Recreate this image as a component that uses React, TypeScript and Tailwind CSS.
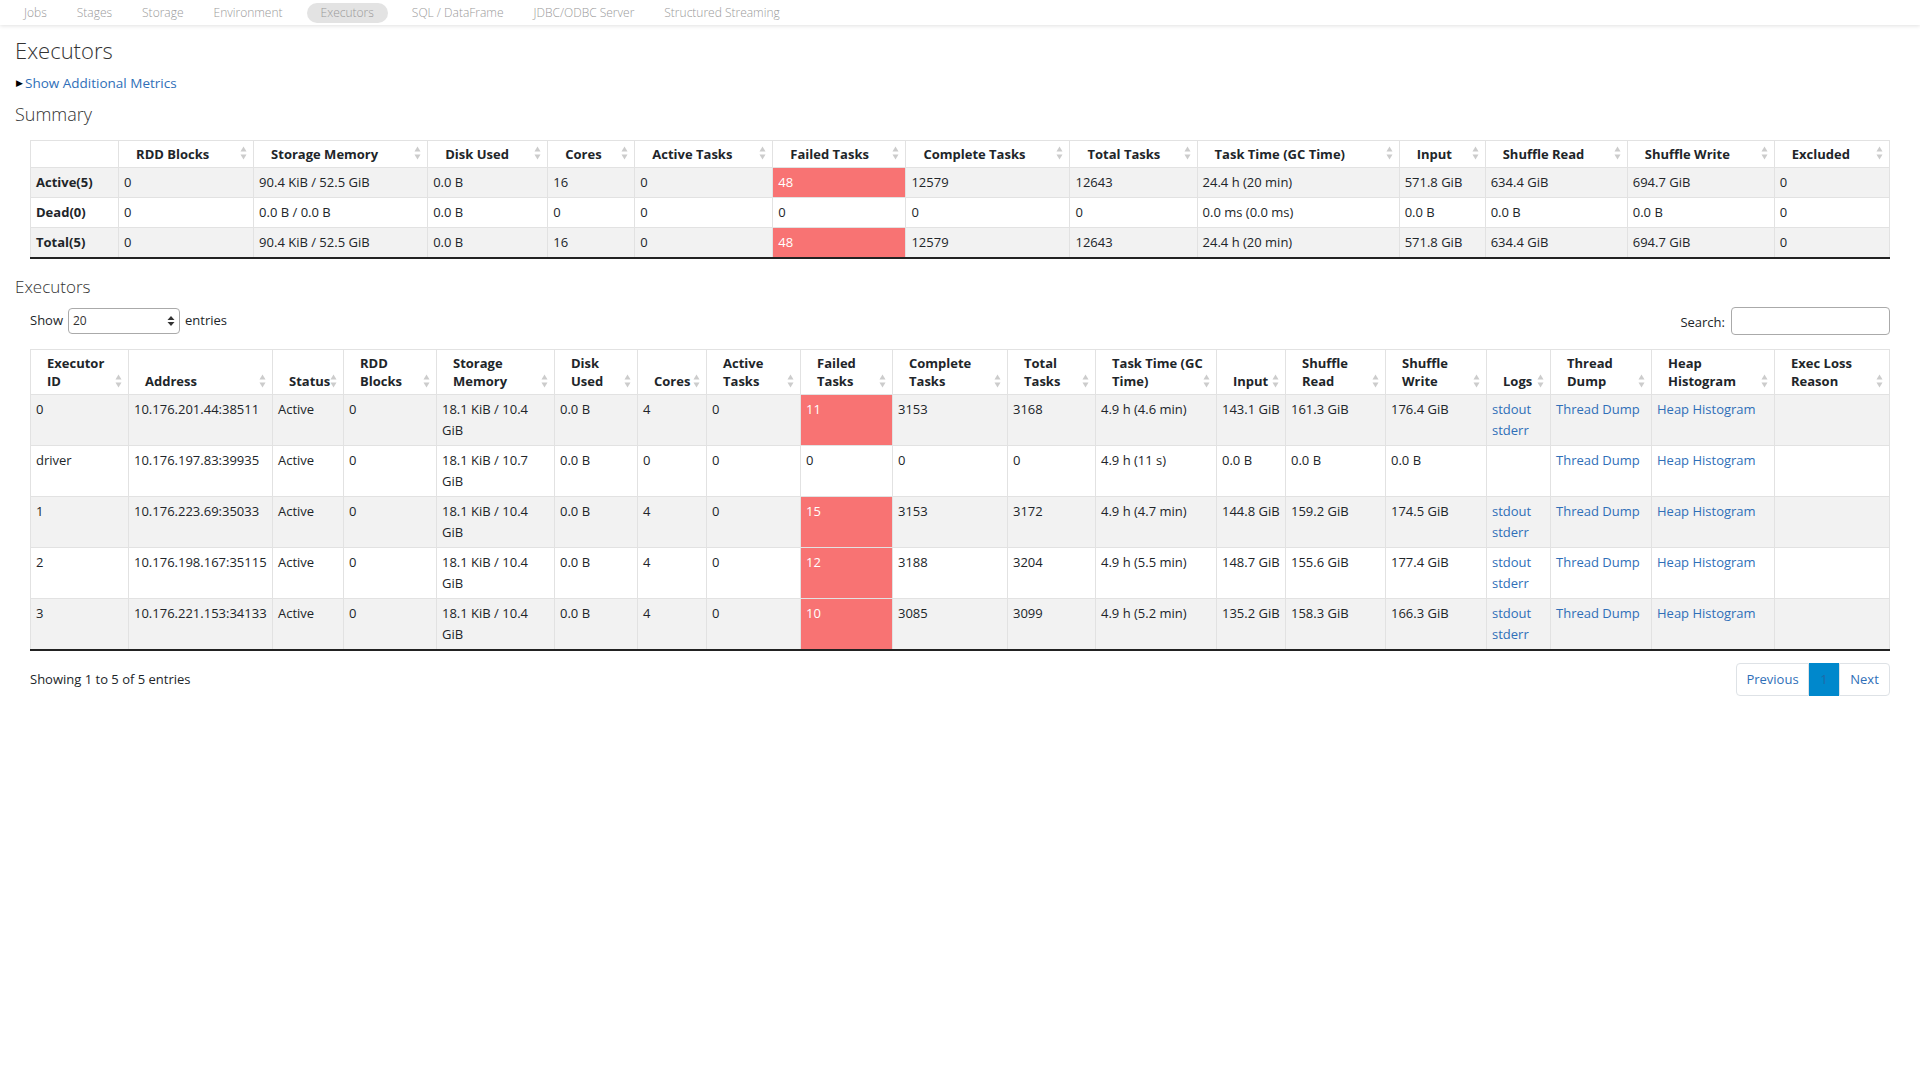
import React from 'react';

const font = { fontFamily: '"Open Sans", "Noto Sans", sans-serif' };

const navItems = ['Jobs', 'Stages', 'Storage', 'Environment', 'Executors', 'SQL / DataFrame', 'JDBC/ODBC Server', 'Structured Streaming'];

function SortIcon() {
  return (
    <svg width="7" height="14" viewBox="0 0 7 14" className="shrink-0 mb-[2px]">
      <path d="M3.5 0.5L6.5 5.5H0.5z" fill="#cccccc" />
      <path d="M3.5 13.5L6.5 8.5H0.5z" fill="#cccccc" />
    </svg>
  );
}

const summaryCols = [88, 135, 174, 120, 87, 138, 133, 164, 127, 202, 86, 142, 147, 115];
const summaryHead = ['', 'RDD Blocks', 'Storage Memory', 'Disk Used', 'Cores', 'Active Tasks', 'Failed Tasks', 'Complete Tasks', 'Total Tasks', 'Task Time (GC Time)', 'Input', 'Shuffle Read', 'Shuffle Write', 'Excluded'];
const summaryRows = [
  ['Active(5)', '0', '90.4 KiB / 52.5 GiB', '0.0 B', '16', '0', '48', '12579', '12643', '24.4 h (20 min)', '571.8 GiB', '634.4 GiB', '694.7 GiB', '0'],
  ['Dead(0)', '0', '0.0 B / 0.0 B', '0.0 B', '0', '0', '0', '0', '0', '0.0 ms (0.0 ms)', '0.0 B', '0.0 B', '0.0 B', '0'],
  ['Total(5)', '0', '90.4 KiB / 52.5 GiB', '0.0 B', '16', '0', '48', '12579', '12643', '24.4 h (20 min)', '571.8 GiB', '634.4 GiB', '694.7 GiB', '0'],
];

const execCols = [98, 144, 71, 93, 118, 83, 69, 94, 92, 115, 88, 121, 69, 100, 101, 64, 101, 123, 115];
const execHead: string[][] = [
  ['Executor', 'ID'], ['Address'], ['Status'], ['RDD', 'Blocks'], ['Storage', 'Memory'], ['Disk', 'Used'], ['Cores'],
  ['Active', 'Tasks'], ['Failed', 'Tasks'], ['Complete', 'Tasks'], ['Total', 'Tasks'], ['Task Time (GC', 'Time)'], ['Input'],
  ['Shuffle', 'Read'], ['Shuffle', 'Write'], ['Logs'], ['Thread', 'Dump'], ['Heap', 'Histogram'], ['Exec Loss', 'Reason'],
];

type Exec = {
  id: string; addr: string; mem: string; cores: string; failed: string; complete: string; total: string;
  time: string; input: string; read: string; write: string; logs: boolean;
};

const executors: Exec[] = [
  { id: '0', addr: '10.176.201.44:38511', mem: '10.4', cores: '4', failed: '11', complete: '3153', total: '3168', time: '4.9 h (4.6 min)', input: '143.1 GiB', read: '161.3 GiB', write: '176.4 GiB', logs: true },
  { id: 'driver', addr: '10.176.197.83:39935', mem: '10.7', cores: '0', failed: '0', complete: '0', total: '0', time: '4.9 h (11 s)', input: '0.0 B', read: '0.0 B', write: '0.0 B', logs: false },
  { id: '1', addr: '10.176.223.69:35033', mem: '10.4', cores: '4', failed: '15', complete: '3153', total: '3172', time: '4.9 h (4.7 min)', input: '144.8 GiB', read: '159.2 GiB', write: '174.5 GiB', logs: true },
  { id: '2', addr: '10.176.198.167:35115', mem: '10.4', cores: '4', failed: '12', complete: '3188', total: '3204', time: '4.9 h (5.5 min)', input: '148.7 GiB', read: '155.6 GiB', write: '177.4 GiB', logs: true },
  { id: '3', addr: '10.176.221.153:34133', mem: '10.4', cores: '4', failed: '10', complete: '3085', total: '3099', time: '4.9 h (5.2 min)', input: '135.2 GiB', read: '158.3 GiB', write: '166.3 GiB', logs: true },
];

const link = 'text-[#2f6fb8]';

export default function App() {
  return (
    <div className="min-h-screen w-full bg-white text-[#212529] text-[13px]" style={font}>
      {/* top nav */}
      <div className="h-[25px] flex items-center pl-[9px] bg-white shadow-[0_1px_4px_rgba(0,0,0,0.12)]">
        {navItems.map((n) =>
          n === 'Executors' ? (
            <span key={n} className="mx-[9px] px-[14px] h-[20px] flex items-center rounded-full bg-[#e3e3e3] text-[#9a9a9a] text-[12px] font-light">
              {n}
            </span>
          ) : (
            <span key={n} className="px-[15px] text-[#9a9a9a] text-[12px] font-light">{n}</span>
          )
        )}
      </div>

      <div className="px-[15px]">
        <h3 className="mt-[10px] text-[22px] leading-[30px] font-light text-[#333]">Executors</h3>
        <div className="mt-[9px] flex items-center h-[18px]">
          <span className="text-[9px] text-black mr-[2px] ml-[1px]">▶</span>
          <span className={`${link} text-[13.5px]`}>Show Additional Metrics</span>
        </div>
        <h4 className="mt-[9px] text-[18px] leading-[26px] font-light text-[#333]">Summary</h4>

        {/* summary table */}
        <div className="px-[15px] mt-[13px]">
          <table className="w-full table-fixed border-collapse border-t border-l border-r border-[#e2e2e2]">
            <colgroup>
              {summaryCols.map((w, i) => (
                <col key={i} style={{ width: w }} />
              ))}
            </colgroup>
            <thead>
              <tr>
                {summaryHead.map((h, i) => (
                  <th key={i} className="border border-[#e2e2e2] pl-[17px] pr-[6px] py-[3px] text-left font-bold text-[#212529] leading-[20px]">
                    {h && (
                      <div className="flex items-center justify-between">
                        <span>{h}</span>
                        <SortIcon />
                      </div>
                    )}
                  </th>
                ))}
              </tr>
            </thead>
            <tbody>
              {summaryRows.map((r, ri) => (
                <tr key={ri} className={ri % 2 === 0 ? 'bg-[#f2f2f2]' : 'bg-white'}>
                  {r.map((c, ci) => {
                    const red = ci === 6 && c !== '0';
                    return (
                      <td
                        key={ci}
                        className={`border-x border-t border-[#e2e2e2] px-[5px] py-[4px] leading-[21px] ${ci === 0 ? 'font-bold' : ''} ${red ? 'bg-[#f87373] text-white' : ''} ${ri === 2 ? 'border-b-2 border-b-[#222]' : ''}`}
                      >
                        {c}
                      </td>
                    );
                  })}
                </tr>
              ))}
            </tbody>
          </table>
        </div>

        <h4 className="mt-[16px] text-[17px] leading-[24px] font-light text-[#333]">Executors</h4>

        <div className="px-[15px]">
          <div className="mt-[8px] flex items-center justify-between">
            <div className="flex items-center gap-[5px]">
              <span>Show</span>
              <div className="w-[112px] h-[26px] border border-[#aaa] rounded-[4px] flex items-center justify-between px-[4px]">
                <span className="text-[12px] text-[#333]">20</span>
                <svg width="8" height="12" viewBox="0 0 8 12">
                  <path d="M4 1L7.5 5H0.5z" fill="#333" />
                  <path d="M4 11L7.5 7H0.5z" fill="#333" />
                </svg>
              </div>
              <span>entries</span>
            </div>
            <div className="flex items-center gap-[6px]">
              <span className="mt-[3px]">Search:</span>
              <div className="w-[159px] h-[28px] border border-[#aaa] rounded-[4px]" />
            </div>
          </div>

          <table className="mt-[14px] w-full table-fixed border-collapse border-t border-l border-r border-[#e2e2e2]">
            <colgroup>
              {execCols.map((w, i) => (
                <col key={i} style={{ width: w }} />
              ))}
            </colgroup>
            <thead>
              <tr>
                {execHead.map((h, i) => (
                  <th key={i} className="border border-[#e2e2e2] pl-[16px] pr-[6px] pt-[4px] pb-[4px] text-left align-bottom font-bold text-[#212529] leading-[18px]">
                    <div className="flex items-end justify-between">
                      <div>
                        {h.map((l) => (
                          <div key={l} className="whitespace-nowrap">{l}</div>
                        ))}
                      </div>
                      <SortIcon />
                    </div>
                  </th>
                ))}
              </tr>
            </thead>
            <tbody>
              {executors.map((e, ri) => {
                const last = ri === executors.length - 1;
                const td = `border-x border-t border-[#e2e2e2] px-[5px] pt-[4px] pb-[4px] align-top leading-[21px] ${last ? 'border-b-2 border-b-[#222]' : ''}`;
                const red = e.failed !== '0';
                return (
                  <tr key={e.id} className={ri % 2 === 0 ? 'bg-[#f2f2f2]' : 'bg-white'}>
                    <td className={td}>{e.id}</td>
                    <td className={`${td} whitespace-nowrap`}>{e.addr}</td>
                    <td className={td}>Active</td>
                    <td className={td}>0</td>
                    <td className={td}>
                      <div>18.1 KiB / {e.mem}</div>
                      <div>GiB</div>
                    </td>
                    <td className={td}>0.0 B</td>
                    <td className={td}>{e.cores}</td>
                    <td className={td}>0</td>
                    <td className={`${td} ${red ? 'bg-[#f87373] text-white' : ''}`}>{e.failed}</td>
                    <td className={td}>{e.complete}</td>
                    <td className={td}>{e.total}</td>
                    <td className={td}>{e.time}</td>
                    <td className={`${td} whitespace-nowrap`}>{e.input}</td>
                    <td className={td}>{e.read}</td>
                    <td className={td}>{e.write}</td>
                    <td className={td}>
                      {e.logs && (
                        <>
                          <div className={link}>stdout</div>
                          <div className={link}>stderr</div>
                        </>
                      )}
                    </td>
                    <td className={`${td} whitespace-nowrap`}>
                      <span className={link}>Thread Dump</span>
                    </td>
                    <td className={`${td} whitespace-nowrap`}>
                      <span className={link}>Heap Histogram</span>
                    </td>
                    <td className={td}></td>
                  </tr>
                );
              })}
            </tbody>
          </table>

          <div className="mt-[12px] flex items-center justify-between">
            <span>Showing 1 to 5 of 5 entries</span>
            <div className="flex h-[33px] text-[13px]">
              <span className={`${link} w-[73px] flex items-center justify-center border border-[#dee2e6] rounded-l-[4px]`}>Previous</span>
              <span className="w-[30px] flex items-center justify-center bg-[#0088cc] text-[#1f6aa8]">1</span>
              <span className={`${link} w-[51px] flex items-center justify-center border border-[#dee2e6] rounded-r-[4px]`}>Next</span>
            </div>
          </div>
        </div>
      </div>
    </div>
  );
}
